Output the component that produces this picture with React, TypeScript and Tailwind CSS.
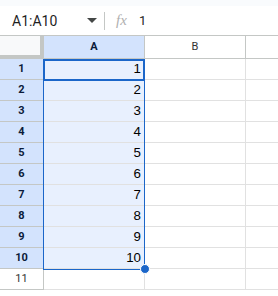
import React from "react";

const rows = [1, 2, 3, 4, 5, 6, 7, 8, 9, 10, 11];

export default function App() {
  const cellFont = { fontFamily: '"Liberation Sans", Arial, sans-serif' };
  return (
    <div className="w-[278px] h-[296px] overflow-hidden bg-white relative" style={{ fontFamily: 'Roboto, "Liberation Sans", sans-serif' }}>
      <div className="h-[6px] bg-[#f9fbfd]" />
      <div className="h-[30px] flex items-center border-b border-[#c4c7c5] text-[#1f1f1f]">
        <div className="w-[80px] pl-[12px] text-[14px] leading-none">A1:A10</div>
        <div className="w-[24px] flex justify-center">
          <svg width="10" height="5" viewBox="0 0 10 5"><path d="M0 0 L10 0 L5 5 Z" fill="#444746" /></svg>
        </div>
        <div className="w-px h-[18px] bg-[#c4c7c5]" />
        <div className="pl-[11px] w-[34px] text-[15px] italic text-[#b0b0b0] leading-none" style={{ fontFamily: '"Liberation Serif", serif' }}>fx</div>
        <div className="text-[13px] leading-none">1</div>
      </div>
      <div className="grid grid-cols-[44px_101px_101px_1fr]">
        <div className="h-[23px] bg-[#f8f9fa] border-r-4 border-b-4 border-[#c4c7c5]" />
        <div className="h-[23px] bg-[#d3e3fd] border-r border-b border-[#c4c7c5] flex items-center justify-center text-[11px] font-bold text-[#0b1b3a]">A</div>
        <div className="h-[23px] bg-white border-r border-b border-[#c4c7c5] flex items-center justify-center text-[11px] text-[#333333]">B</div>
        <div className="h-[23px] bg-white border-b border-[#c4c7c5]" />
        {rows.map((r) => {
          const sel = r <= 10;
          return (
            <React.Fragment key={r}>
              <div className={`h-[21px] border-r border-b border-[#c4c7c5] flex items-center justify-center text-[11px] ${sel ? "bg-[#d3e3fd] font-bold text-[#0b1b3a]" : "bg-white text-[#333333]"}`}>{r}</div>
              <div className={`h-[21px] border-r border-b border-[#e1e1e1] flex items-center justify-end pr-[3px] text-[13.33px] text-black ${sel ? "bg-[#e8f0fe]" : "bg-white"}`} style={cellFont}>{sel ? r : ""}</div>
              <div className="h-[21px] border-r border-b border-[#e1e1e1] bg-white" />
              <div className="h-[21px] border-b border-[#e1e1e1] bg-white" />
            </React.Fragment>
          );
        })}
      </div>
      <div className="absolute left-[43px] top-[59px] w-[102px] h-[211px] border border-[#1b66c9] pointer-events-none" />
      <div className="absolute left-[43px] top-[59px] w-[102px] h-[22px] border-2 border-[#1b66c9] pointer-events-none" />
      <div className="absolute left-[140px] top-[264px] w-[10px] h-[10px] rounded-full bg-[#1b66c9] border border-white" />
    </div>
  );
}
